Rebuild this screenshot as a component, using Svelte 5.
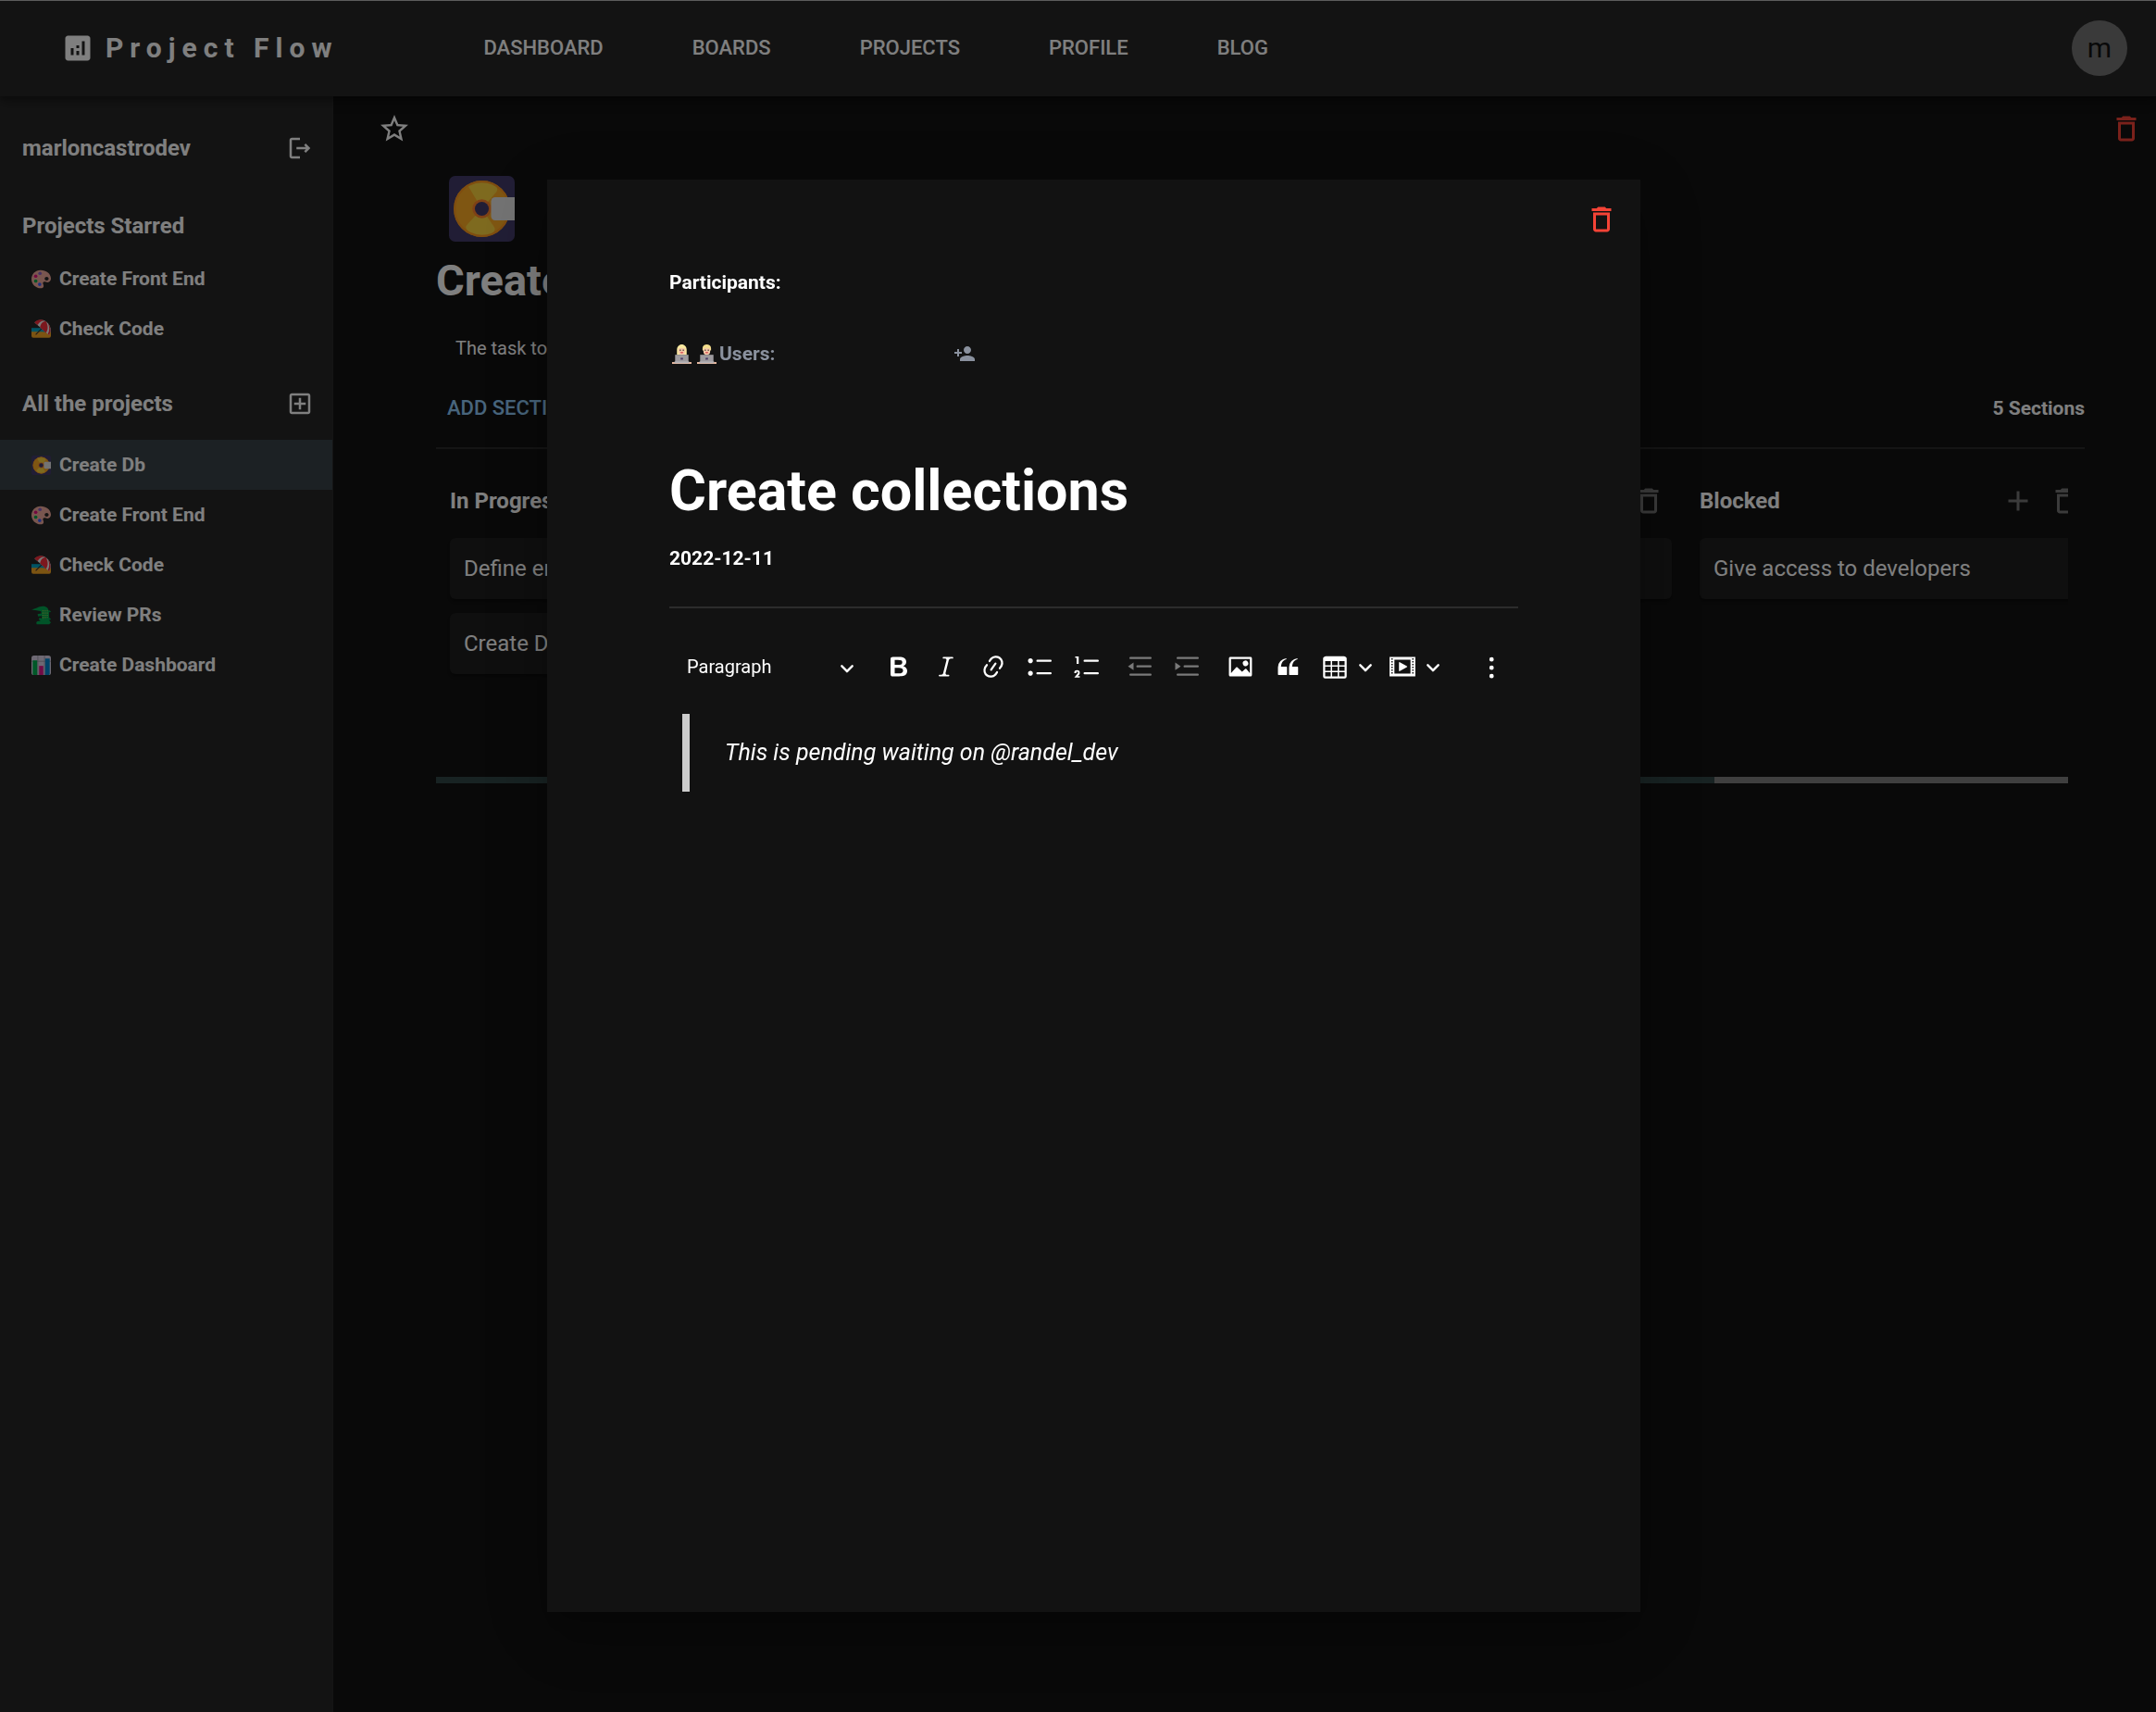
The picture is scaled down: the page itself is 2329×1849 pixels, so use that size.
<script>
  const nav = ['DASHBOARD', 'BOARDS', 'PROJECTS', 'PROFILE', 'BLOG'];

  const starred = [
    { icon: 'palette', name: 'Create Front End' },
    { icon: 'beach', name: 'Check Code' }
  ];

  const projects = [
    { icon: 'disc', name: 'Create Db', active: true },
    { icon: 'palette', name: 'Create Front End' },
    { icon: 'beach', name: 'Check Code' },
    { icon: 'croc', name: 'Review PRs' },
    { icon: 'chart', name: 'Create Dashboard' }
  ];

  const sections = [
    { title: 'In Progress', tasks: ['Define entities', 'Create Database'] },
    { title: '', tasks: [] },
    { title: 'Done', tasks: ['Choose engine'] },
    { title: 'Blocked', tasks: ['Give access to developers'] },
    { title: '', tasks: [] }
  ];

  let boardWidth = $state(1763);
  let thumb = $derived(Math.min(100, (boardWidth / (sections.length * 450)) * 100));

  const paths = {
    analytics: 'M19 3H5c-1.1 0-2 .9-2 2v14c0 1.1.9 2 2 2h14c1.1 0 2-.9 2-2V5c0-1.1-.9-2-2-2zM9 17H7v-5h2v5zm4 0h-2v-3h2v3zm0-5h-2v-2h2v2zm4 5h-2V7h2v10z',
    logout: 'M17 8l-1.4 1.4 1.6 1.6H9v2h8.2l-1.6 1.6L17 16l4-4-4-4zM5 5h7V3H5c-1.1 0-2 .9-2 2v14c0 1.1.9 2 2 2h7v-2H5V5z',
    addBox: 'M19 3H5c-1.11 0-2 .9-2 2v14c0 1.1.89 2 2 2h14c1.1 0 2-.9 2-2V5c0-1.1-.9-2-2-2zm0 16H5V5h14v14zm-8-2h2v-4h4v-2h-4V7h-2v4H7v2h4z',
    star: 'm22 9.24-7.19-.62L12 2 9.19 8.63 2 9.24l5.46 4.73L5.82 21 12 17.27 18.18 21l-1.63-7.03L22 9.24zM12 15.4l-3.76 2.27 1-4.28-3.32-2.88 4.38-.38L12 6.1l1.71 4.04 4.38.38-3.32 2.88 1 4.28L12 15.4z',
    trash: 'M6 19c0 1.1.9 2 2 2h8c1.1 0 2-.9 2-2V7H6v12zM8 9h8v10H8V9zm7.5-5-1-1h-5l-1 1H5v2h14V4h-3.5z',
    add: 'M19 13h-6v6h-2v-6H5v-2h6V5h2v6h6v2z',
    personAdd: 'M15 12c2.21 0 4-1.79 4-4s-1.79-4-4-4-4 1.79-4 4 1.79 4 4 4zm-9-2V7H4v3H1v2h3v3h2v-3h3v-2H6zm9 4c-2.67 0-8 1.34-8 4v2h16v-2c0-2.66-5.33-4-8-4z'
  };

  const tools = {
    bold: 'M10.187 17H5.773c-.637 0-1.092-.138-1.364-.415-.273-.277-.409-.718-.409-1.323V4.738c0-.617.14-1.062.419-1.332.279-.27.73-.406 1.354-.406h4.68c.69 0 1.288.041 1.793.124.506.083.96.242 1.36.478.341.197.644.447.906.75a3.262 3.262 0 0 1 .808 2.162c0 1.401-.722 2.426-2.167 3.075C15.05 10.175 16 11.315 16 13.01a3.756 3.756 0 0 1-2.296 3.504 6.1 6.1 0 0 1-1.517.377c-.571.073-1.238.11-2 .11zm-.217-6.217H7v4.087h3.069c1.977 0 2.965-.69 2.965-2.072 0-.707-.256-1.22-.768-1.537-.512-.319-1.277-.478-2.296-.478zM7 5.13v3.619h2.606c.729 0 1.292-.067 1.69-.2a1.6 1.6 0 0 0 .91-.765c.165-.267.247-.566.247-.897 0-.707-.26-1.176-.778-1.409-.519-.232-1.31-.348-2.375-.348H7z',
    italic: 'm9.586 14.633.021.004c-.036.335.095.655.393.962.082.083.173.15.274.201h1.474a.6.6 0 1 1 0 1.2H5.304a.6.6 0 0 1 0-1.2h1.15c.474-.07.809-.182 1.005-.334.157-.122.291-.32.404-.597l2.416-9.55a1.053 1.053 0 0 0-.281-.823 1.12 1.12 0 0 0-.442-.296H8.15a.6.6 0 0 1 0-1.2h6.443a.6.6 0 1 1 0 1.2h-1.195c-.376.056-.65.155-.823.296-.215.175-.423.439-.623.79l-2.366 9.347z',
    link: 'm11.077 15 .991-1.416a.75.75 0 1 1 1.229.86l-1.148 1.64a.748.748 0 0 1-.217.206 5.251 5.251 0 0 1-8.503-5.955.741.741 0 0 1 .12-.274l1.147-1.639a.75.75 0 1 1 1.228.86L4.933 10.7l.006.003a3.75 3.75 0 0 0 6.132 4.294l.006.004zm5.494-5.335a.748.748 0 0 1-.12.274l-1.147 1.639a.75.75 0 1 1-1.228-.86l.86-1.23a3.75 3.75 0 0 0-6.144-4.301l-.86 1.229a.75.75 0 0 1-1.229-.86l1.148-1.64a.748.748 0 0 1 .217-.206 5.251 5.251 0 0 1 8.503 5.955zm-4.563-2.532a.75.75 0 0 1 .184 1.045l-3.155 4.505a.75.75 0 1 1-1.229-.86l3.155-4.506a.75.75 0 0 1 1.045-.184z',
    bullets: 'M7 5.75c0 .414.336.75.75.75h9.5a.75.75 0 1 0 0-1.5h-9.5a.75.75 0 0 0-.75.75zm-6 0C1 4.784 1.777 4 2.75 4c.966 0 1.75.777 1.75 1.75 0 .966-.777 1.75-1.75 1.75C1.784 7.5 1 6.723 1 5.75zm6 9c0 .414.336.75.75.75h9.5a.75.75 0 1 0 0-1.5h-9.5a.75.75 0 0 0-.75.75zm-6 0c0-.966.777-1.75 1.75-1.75.966 0 1.75.777 1.75 1.75 0 .966-.777 1.75-1.75 1.75-.966 0-1.75-.777-1.75-1.75z',
    numbers: 'M7 5.75c0 .414.336.75.75.75h9.5a.75.75 0 1 0 0-1.5h-9.5a.75.75 0 0 0-.75.75zM3.5 3v5H2V3.7H1v-1h2.5V3zM.343 17.857l2.59-3.257H2.92a.6.6 0 1 0-1.04 0H.302a2 2 0 1 1 3.995 0h-.001c-.048.405-.16.734-.333.988-.175.254-.59.692-1.244 1.312H4.3v1h-4l.043-.043zM7 14.75a.75.75 0 0 1 .75-.75h9.5a.75.75 0 1 1 0 1.5h-9.5a.75.75 0 0 1-.75-.75z',
    outdent: 'M2 3.75c0 .414.336.75.75.75h14.5a.75.75 0 1 0 0-1.5H2.75a.75.75 0 0 0-.75.75zm5 6c0 .414.336.75.75.75h9.5a.75.75 0 1 0 0-1.5h-9.5a.75.75 0 0 0-.75.75zM2.75 16.5h14.5a.75.75 0 1 0 0-1.5H2.75a.75.75 0 1 0 0 1.5zM5 7v5.5L1 9.75z',
    indent: 'M2 3.75c0 .414.336.75.75.75h14.5a.75.75 0 1 0 0-1.5H2.75a.75.75 0 0 0-.75.75zm5 6c0 .414.336.75.75.75h9.5a.75.75 0 1 0 0-1.5h-9.5a.75.75 0 0 0-.75.75zM2.75 16.5h14.5a.75.75 0 1 0 0-1.5H2.75a.75.75 0 1 0 0 1.5zM1 7v5.5l4-2.75z',
    image: 'M6.91 10.54c.26-.23.64-.21.88.03l3.36 3.14 2.23-2.06a.64.64 0 0 1 .87 0l2.52 2.97V4.5H3.2v10.12l3.71-4.08zm10.27-7.51c.6 0 1.09.47 1.09 1.05v11.84c0 .59-.49 1.06-1.09 1.06H2.79c-.6 0-1.09-.47-1.09-1.06V4.08c0-.58.49-1.05 1.1-1.05h14.38zm-5.22 5.56a1.96 1.96 0 1 1 3.4-1.96 1.96 1.96 0 0 1-3.4 1.96z',
    quote: 'M3 10.423a6.5 6.5 0 0 1 6.056-6.408l.038.67C6.448 5.423 5.354 7.663 5.22 10H9c.552 0 .5.432.5.986v4.511c0 .554-.448.503-1 .503h-5c-.552 0-.5-.449-.5-1.003v-4.574zm8 0a6.5 6.5 0 0 1 6.056-6.408l.038.67c-2.646.739-3.74 2.979-3.873 5.315H17c.552 0 .5.432.5.986v4.511c0 .554-.448.503-1 .503h-5c-.552 0-.5-.449-.5-1.003v-4.574z',
    table: 'M3 6v3h4V6H3zm0 4v3h4v-3H3zm0 4v3h4v-3H3zm5 3h4v-3H8v3zm5 0h4v-3h-4v3zm4-4v-3h-4v3h4zm0-4V6h-4v3h4zm1.5 8a1.5 1.5 0 0 1-1.5 1.5H3A1.5 1.5 0 0 1 1.5 17V4c.222-.863 1.068-1.5 2-1.5h13c.932 0 1.778.637 2 1.5v13zM12 13v-3H8v3h4zm0-4V6H8v3h4z',
    media: 'M18.68 3.03c.6 0 .59-.03.59.55v12.84c0 .59.01.56-.59.56H1.29c-.6 0-.59.03-.59-.56V3.58c0-.58-.01-.55.6-.55h17.38zM15.77 15V5H4.2v10h11.57zM2 4v1h1V4H2zm0 2v1h1V6H2zm0 2v1h1V8H2zm0 2v1h1v-1H2zm0 2v1h1v-1H2zm0 2v1h1v-1H2zM17 4v1h1V4h-1zm0 2v1h1V6h-1zm0 2v1h1V8h-1zm0 2v1h1v-1h-1zm0 2v1h1v-1h-1zm0 2v1h1v-1h-1zM7.5 7.177a.4.4 0 0 1 .593-.351l5.133 2.824a.4.4 0 0 1 0 .7l-5.133 2.824a.4.4 0 0 1-.593-.35V7.176v.001z',
    more: 'M9.5 3.2a1.6 1.6 0 1 1 0 3.2 1.6 1.6 0 0 1 0-3.2zm0 6a1.6 1.6 0 1 1 0 3.2 1.6 1.6 0 0 1 0-3.2zm0 6a1.6 1.6 0 1 1 0 3.2 1.6 1.6 0 0 1 0-3.2z'
  };

  const textTools = [
    ['bold', 'Bold'],
    ['italic', 'Italic'],
    ['link', 'Link'],
    ['bullets', 'Bulleted List'],
    ['numbers', 'Numbered List']
  ];
</script>

{#snippet icon(name)}
  <svg class="icon" viewBox="0 0 24 24" aria-hidden="true"><path d={paths[name]} /></svg>
{/snippet}

{#snippet tool(name, label, disabled = false)}
  <button class="tool" type="button" aria-label={label} {disabled}>
    <svg viewBox="0 0 20 20" aria-hidden="true"><path fill-rule="evenodd" d={tools[name]} /></svg>
  </button>
{/snippet}

{#snippet chevron()}
  <svg class="chevron" viewBox="0 0 10 10" aria-hidden="true">
    <path d="M.941 4.523a.75.75 0 1 1 1.06-1.06l3.006 3.005 3.005-3.005a.75.75 0 1 1 1.06 1.06l-3.549 3.55a.75.75 0 0 1-1.168-.136L.941 4.523z" />
  </svg>
{/snippet}

{#snippet emoji(name)}
  <svg class="emoji" viewBox="0 0 32 32" aria-hidden="true">
    {#if name === 'disc'}
      <rect width="32" height="32" rx="3" fill="#433b6b" />
      <circle cx="16" cy="16" r="13.7" fill="#ffad24" />
      <path d="M16 16 9.5 5.2C9.2 4.3 12.5 2.8 16 2.8s7.5 1.5 7.5 3.6c0 1-.5 1.5-1 2.1z" fill="#fcd53f" />
      <path d="M16 16 9.3 23.2c-.6.7-1.2 1.3-1 2.2.4 1.8 4.2 3.8 7.7 3.8s6-1.2 6.3-3.1c.1-.6-.2-1-.5-1.5z" fill="#fcd53f" />
      <circle cx="16" cy="16" r="13.2" fill="none" stroke="#ff9a1f" />
      <circle cx="16" cy="16" r="4.6" fill="#ff822d" />
      <circle cx="16" cy="16" r="3.4" fill="#433b6b" />
      <path d="M32 10.4h-9.5a2 2 0 0 0-2 2v7.2a2 2 0 0 0 2 2H32z" fill="#e6e6e6" />
    {:else if name === 'palette'}
      <path d="M15 1C6.5 1 0 7.5 0 16c0 8 7 15 15 15 2.800 0 5.500-1.300 5-4.500-.4-2.600-2.500-4.500 0-6 2.500-1.400 5 1.500 8 .5 3-1 4-3.500 4-6C32 6.500 24 1 15 1zm10 11c1.800 0 3.300 1.400 3.300 3.200s-1.500 3-3.300 3-3.300-1.200-3.300-3S23.200 12 25 12z" fill="#f3ad9f" />
      <circle cx="7" cy="11" r="2.8" fill="#e6107f" />
      <circle cx="14" cy="6.5" r="2.8" fill="#8d65c5" />
      <circle cx="7" cy="19" r="2.8" fill="#00a64b" />
      <circle cx="13.5" cy="24.5" r="2.8" fill="#3f5fff" />
    {:else if name === 'beach'}
      <path d="M0 14h32v9H0z" fill="#00a6c8" />
      <path d="M0 20h14c8 0 13 1 18 0v7a3 3 0 0 1-3 3H3a3 3 0 0 1-3-3z" fill="#f9a825" />
      <path d="M18 14 7 25" stroke="#3a3130" stroke-width="1.6" />
      <path d="M5 5C11-1 21-1 27 6c5 6 6 13 2 20z" fill="#f4f4f4" />
      <path d="M5 5C9 0 16-1 22 2c-4 0-9 2-12 7z" fill="#f92f3c" />
      <path d="M24 3C18 3 15 7 14 13l10 9c3-5 4-11 0-19z" fill="#f92f3c" />
      <path d="M27 6c5 6 6 13 2 20l-2-2c3-6 3-12 0-18z" fill="#f92f3c" />
    {:else if name === 'croc'}
      <path d="M0 6C7 6 11 1 19 1c6 0 9 4 9 7 2 0 4 1 4 3-2-1-3 0-3 0v8c0 2 3 2 3 4l-3 1 3 4-3 3H9c-2-2-1-4 1-5l5-1-3-2 1-3 4 1v-4l-6 1-1-4 6-1v-3C12 7 5 9 0 6z" fill="#00a650" />
      <path d="M19 8v15M22.500 8v13M26 8v12" stroke="#c4d24a" stroke-width="1.6" stroke-dasharray="1.6 2" />
    {:else if name === 'chart'}
      <rect width="32" height="32" rx="4" fill="#dcd3e8" />
      <path d="M10.500 0v32M21.500 0v32M0 9.500h32" stroke="#9a95a5" stroke-width="1.2" />
      <path d="M2 8h7.500v24H4c-1 0-2-1-2-2z" fill="#00b050" />
      <path d="M12.500 17h7v15h-7z" fill="#e3168c" />
      <path d="M22.500 5H30v25c0 1-1 2-2 2h-5.500z" fill="#0087d0" />
    {:else}
      {#if name === 'woman'}
        <path d="M8 17V9c0-5 3.500-9 8-9s8 4 8 9v8z" fill="#fbe9a0" />
      {:else}
        <path d="M9 10V6c0-4 3.500-6 7-6s7 2 7 6v4z" fill="#f3dd8d" />
      {/if}
      <path d="M10.500 7c3-1 7-1 11 0v5c0 3-2 5-5.500 5s-5.500-2-5.500-5z" fill="#f5c9a8" />
      <path d="M12.500 8.500h2v2h-2zM17.500 8.500h2v2h-2z" fill="#5b4a44" />
      <path d="M13.500 12.500h5l-1 2h-3z" fill="#d33c4a" />
      <path d="M5 17h22v13H5z" fill="#9d9a9e" />
      <path d="M0 29h32v3H0z" fill="#e9b9a0" />
      <path d="M4 28h24v3H4z" fill="#b4b1b5" />
      <path d="M14 22h4v3h-4z" fill="#4b3a63" />
    {/if}
  </svg>
{/snippet}

<div class="page">
  <header class="header">
    <a class="brand" href="#home">{@render icon('analytics')}<span>Project Flow</span></a>
    <nav class="nav">
      {#each nav as item}
        <a href="#{item.toLowerCase()}">{item}</a>
      {/each}
    </nav>
    <button class="avatar" type="button" aria-label="Account">m</button>
  </header>

  <div class="body">
    <aside class="sidebar">
      <div class="side-row user">
        <span>marloncastrodev</span>
        <button class="bare" type="button" aria-label="Log out">{@render icon('logout')}</button>
      </div>

      <h2 class="side-row">Projects Starred</h2>
      <nav class="side-list starred" aria-label="Projects starred">
        {#each starred as item}
          <a href="#project">{@render emoji(item.icon)}{item.name}</a>
        {/each}
      </nav>

      <div class="side-row all">
        <h2>All the projects</h2>
        <button class="bare" type="button" aria-label="Add project">{@render icon('addBox')}</button>
      </div>
      <nav class="side-list" aria-label="All the projects">
        {#each projects as item}
          <a href="#project" class:active={item.active}>{@render emoji(item.icon)}{item.name}</a>
        {/each}
      </nav>
    </aside>

    <main class="main">
      <div class="topbar">
        <button class="round" type="button" aria-label="Star project">{@render icon('star')}</button>
        <button class="round danger" type="button" aria-label="Delete project">{@render icon('trash')}</button>
      </div>

      <section class="project">
        <div class="cover">{@render emoji('disc')}</div>
        <h1>Create Db</h1>
        <p class="description">The task to do</p>
        <div class="project-bar">
          <button class="add-section" type="button">ADD SECTION</button>
          <span>{sections.length} Sections</span>
        </div>

        <div class="board">
          <div class="columns" bind:clientWidth={boardWidth}>
            {#each sections as section}
              <section class="column">
                <div class="column-head">
                  <h3>{section.title}</h3>
                  <button class="small" type="button" aria-label="Add task">{@render icon('add')}</button>
                  <button class="small" type="button" aria-label="Delete section">{@render icon('trash')}</button>
                </div>
                {#each section.tasks as task}
                  <article class="card">{task}</article>
                {/each}
              </section>
            {/each}
          </div>
          <div class="scroll"><div class="thumb" style="width: {thumb}%"></div></div>
        </div>
      </section>
    </main>
  </div>

  <div class="backdrop">
    <div class="dialog" role="dialog" aria-modal="true" aria-label="Create collections">
      <div class="dialog-bar">
        <button class="small danger" type="button" aria-label="Delete task">{@render icon('trash')}</button>
      </div>
      <div class="dialog-body">
        <h3 class="label">Participants:</h3>
        <div class="users">
          <div class="users-label">{@render emoji('woman')}{@render emoji('man')}<span>Users:</span></div>
          <button class="bare" type="button" aria-label="Add participant">{@render icon('personAdd')}</button>
        </div>
        <h2 class="title">Create collections</h2>
        <p class="label">2022-12-11</p>
        <hr />

        <div class="toolbar">
          <div class="heading">
            <select aria-label="Heading">
              <option>Paragraph</option>
              <option>Heading 1</option>
              <option>Heading 2</option>
              <option>Heading 3</option>
            </select>
            {@render chevron()}
          </div>
          <div class="group">
            {#each textTools as [name, label]}
              {@render tool(name, label)}
            {/each}
          </div>
          <div class="group">
            {@render tool('outdent', 'Decrease indent', true)}
            {@render tool('indent', 'Increase indent', true)}
          </div>
          <div class="group">
            {@render tool('image', 'Insert image')}
            {@render tool('quote', 'Block quote')}
            <div class="split">
              {@render tool('table', 'Insert table')}
              <button class="arrow" type="button" aria-label="Table options">{@render chevron()}</button>
            </div>
            <div class="split">
              {@render tool('media', 'Insert media')}
              <button class="arrow" type="button" aria-label="Media options">{@render chevron()}</button>
            </div>
          </div>
          <div class="more">{@render tool('more', 'Show more items')}</div>
        </div>

        <blockquote>This is pending waiting on @randel_dev</blockquote>
      </div>
    </div>
  </div>
</div>

<style>
  :global(body) {
    background: #121212;
  }

  .page,
  .page * {
    box-sizing: border-box;
  }

  .page {
    min-height: 100vh;
    display: flex;
    flex-direction: column;
    background: #121212;
    color: #fff;
    font-family: Roboto, "Liberation Sans", sans-serif;
    font-size: 24px;
    line-height: 36px;
  }

  h1,
  h2,
  h3,
  p,
  hr,
  blockquote {
    margin: 0;
  }

  h2,
  h3 {
    font-size: 24px;
    font-weight: 700;
  }

  a {
    color: inherit;
    text-decoration: none;
  }

  button,
  select {
    padding: 0;
    border: 0;
    background: none;
    color: inherit;
    font: inherit;
    cursor: pointer;
  }

  .icon {
    display: block;
    width: 36px;
    height: 36px;
    fill: currentColor;
  }

  .emoji {
    display: block;
    width: 21px;
    height: 21px;
    flex: none;
  }

  .header {
    position: relative;
    display: flex;
    align-items: center;
    height: 104px;
    padding: 0 31px 2px 66px;
    border-top: 1px solid #b8b8b8;
    background: #272727;
    box-shadow: 0 3px 6px rgba(0, 0, 0, 0.3), 0 6px 12px rgba(0, 0, 0, 0.2);
  }

  .brand {
    display: flex;
    align-items: center;
    gap: 12px;
    font-size: 30px;
    font-weight: 700;
    letter-spacing: 7px;
  }

  .nav {
    display: flex;
    flex: 1;
    gap: 96px;
    margin-left: 157px;
    font-size: 22px;
    font-weight: 500;
  }

  .avatar {
    width: 60px;
    height: 60px;
    border-radius: 50%;
    background: #757575;
    color: #121212;
    font-size: 30px;
  }

  .body {
    display: flex;
    flex: 1;
  }

  .sidebar {
    flex: none;
    width: 360px;
    padding-top: 38px;
    border-right: 1px solid #2b2b2b;
    background: #272727;
  }

  .side-row {
    display: flex;
    align-items: center;
    justify-content: space-between;
    padding: 0 20px 0 24px;
    font-weight: 700;
  }

  .side-row .icon {
    width: 30px;
    height: 30px;
  }

  .user {
    margin-bottom: 48px;
  }

  .side-list {
    display: flex;
    flex-direction: column;
    font-size: 21px;
    font-weight: 700;
  }

  .starred {
    margin: 12px 0 36px;
  }

  .all {
    margin-bottom: 21px;
  }

  .side-list a {
    display: flex;
    align-items: center;
    gap: 9px;
    height: 54px;
    padding-left: 34px;
  }

  .side-list .active {
    background: #384248;
  }

  .main {
    flex: 1;
    min-width: 0;
  }

  .topbar {
    display: flex;
    justify-content: space-between;
    padding: 5px 2px 0 36px;
  }

  .round,
  .small {
    display: flex;
    align-items: center;
    justify-content: center;
    flex: none;
    width: 60px;
    height: 60px;
    border-radius: 50%;
  }

  .small {
    width: 51px;
    height: 51px;
  }

  .danger {
    color: #f44336;
  }

  .project {
    padding: 21px 77px 0 111px;
  }

  .cover .emoji {
    width: 71px;
    height: 71px;
    margin-left: 14px;
  }

  h1 {
    margin-top: 14px;
    font-size: 47px;
    line-height: 56px;
    font-weight: 700;
  }

  .description {
    padding: 30px 21px 23px;
    font-size: 20px;
    line-height: 30px;
  }

  .project-bar {
    display: flex;
    align-items: center;
    justify-content: space-between;
    padding-bottom: 15px;
    border-bottom: 2px solid #2a2a2a;
    font-size: 21px;
    font-weight: 700;
  }

  .add-section {
    height: 54px;
    padding: 0 12px;
    color: #90caf9;
    font-size: 22px;
    font-weight: 500;
  }

  .board {
    margin-right: 18px;
  }

  .columns {
    display: flex;
    min-height: 354px;
    padding-top: 30px;
    overflow: hidden;
  }

  .column {
    display: flex;
    flex: none;
    flex-direction: column;
    gap: 15px;
    width: 450px;
    padding: 0 15px;
  }

  .column-head {
    display: flex;
    align-items: center;
    color: #777;
  }

  .column-head h3 {
    flex: 1;
    color: #fff;
  }

  .card {
    padding: 15px;
    border-radius: 6px;
    background: #1e1e1e;
    box-shadow: 0 3px 3px rgba(0, 0, 0, 0.3);
  }

  .scroll {
    height: 7px;
    background: #7f7f7f;
  }

  .thumb {
    height: 7px;
    background: #304646;
  }

  .backdrop {
    position: fixed;
    inset: 0;
    display: flex;
    padding: 194px 557px 108px 591px;
    background: rgba(0, 0, 0, 0.5);
  }

  .dialog {
    flex: 1;
    min-width: 0;
    background: #121212;
    box-shadow: 0 16px 22px -10px rgba(0, 0, 0, 0.2), 0 36px 57px 4px rgba(0, 0, 0, 0.14),
      0 14px 69px 12px rgba(0, 0, 0, 0.12);
  }

  .dialog-bar {
    display: flex;
    justify-content: flex-end;
    padding: 17px 17px 0 0;
  }

  .dialog-body {
    padding: 25px 132px 0;
  }

  .label {
    font-size: 21px;
    font-weight: 700;
  }

  .users {
    display: flex;
    align-items: center;
    justify-content: space-between;
    width: 331px;
    margin: 41px 0 95px;
    color: #8a919e;
    font-size: 21px;
    font-weight: 700;
  }

  .users-label {
    display: flex;
    align-items: center;
    gap: 6px;
    padding-left: 3px;
  }

  .users-label span {
    margin-left: -3px;
  }

  .users .icon {
    width: 24px;
    height: 24px;
  }

  .title {
    margin-bottom: 20px;
    font-size: 61px;
    line-height: 70px;
  }

  hr {
    margin: 34px 0 33px;
    border: 0;
    border-top: 2px solid #2c2c2c;
  }

  .toolbar {
    display: flex;
    align-items: center;
    gap: 12px;
    height: 60px;
    padding: 0 6px 0 10px;
  }

  .heading {
    position: relative;
    width: 203px;
    font-size: 20px;
  }

  .heading select {
    width: 100%;
    height: 45px;
    padding-left: 9px;
    appearance: none;
  }

  .heading option {
    background: #121212;
  }

  .heading .chevron {
    position: absolute;
    top: 15px;
    right: 13px;
    pointer-events: none;
  }

  .group,
  .split {
    display: flex;
    align-items: center;
    gap: 6px;
  }

  .tool {
    display: flex;
    align-items: center;
    justify-content: center;
    width: 45px;
    height: 45px;
  }

  .tool svg {
    width: 30px;
    height: 30px;
    fill: currentColor;
  }

  .tool:disabled {
    color: #7a7a7a;
    cursor: default;
  }

  .split {
    gap: 0;
  }

  .arrow {
    display: flex;
    justify-content: center;
    width: 22px;
  }

  .chevron {
    display: block;
    width: 16px;
    height: 16px;
    fill: currentColor;
  }

  .more {
    margin-left: auto;
  }

  blockquote {
    margin: 21px 14px 0;
    padding: 24px 38px;
    border-left: 8px solid #ccc;
    font-size: 25px;
    font-style: italic;
  }
</style>
